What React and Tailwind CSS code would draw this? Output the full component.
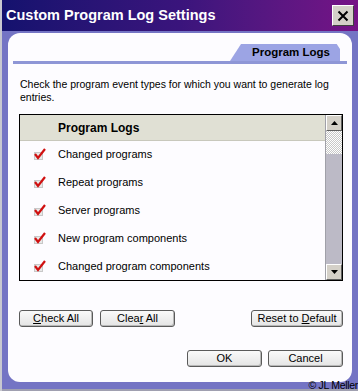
import React from "react";

function Check() {
  return (
    <svg width="12" height="12" viewBox="0 0 12 12" className="block">
      <rect x="0" y="4" width="9" height="8" fill="#c8c8c8" />
      <rect x="1" y="5" width="7" height="6" fill="#e8e8e8" />
      <path d="M1 6 L4 10 L11 1" stroke="#d01010" strokeWidth="2.2" fill="none" strokeLinejoin="miter" />
    </svg>
  );
}

function Btn({ children, w }) {
  return (
    <button
      className={`h-[17px] ${w} rounded-[3px] border border-[#5a5a5a] bg-gradient-to-b from-[#fafafa] to-[#e4e4e4] text-[11px] leading-none text-black flex items-center justify-center shadow-[inset_-1px_-1px_0_#b8b8b8]`}
    >
      {children}
    </button>
  );
}

export default function App() {
  const rows = [
    "Changed programs",
    "Repeat programs",
    "Server programs",
    "New program components",
    "Changed program components",
  ];
  return (
    <div
      className="w-[358px] h-[391px] flex flex-col bg-[#7474c4] border-l-2 border-[#c8c8d0] relative overflow-hidden"
      style={{ fontFamily: '"Liberation Sans", Arial, sans-serif' }}
    >
      {/* Title bar */}
      <div className="h-[31px] shrink-0 flex items-center justify-between pl-[4px] pr-[4px] bg-gradient-to-r from-[#14126e] via-[#3a147c] to-[#761286]">
        <span className="text-white font-bold text-[14.5px] tracking-[0px]">
          Custom Program Log Settings
        </span>
        <div className="w-[22px] h-[21px] bg-[#d4d0c8] border border-t-white border-l-white border-b-[#404040] border-r-[#404040] flex items-center justify-center">
          <svg width="12" height="12" viewBox="0 0 12 12">
            <path d="M1.5 1.5 L10.5 10.5 M10.5 1.5 L1.5 10.5" stroke="#000" strokeWidth="2" />
          </svg>
        </div>
      </div>

      {/* Body */}
      <div className="flex-1 pl-[6px] pr-[6px] pt-[2px] pb-[9px] flex flex-col">
        <div className="flex-1 bg-[#fdfcff] rounded-[12px] flex flex-col">
          {/* Tab row */}
          <div className="pt-[11px] px-[5px] flex flex-col">
            <div className="flex justify-end pr-[7px]">
              <div
                className="h-[17px] w-[110px] bg-[#9ca4e4] flex items-center justify-end pr-[10px] text-[11.5px] font-bold text-black"
                style={{ clipPath: "polygon(10% 0, 97% 0, 100% 30%, 100% 100%, 0 100%)", borderTopLeftRadius: 6 }}
              >
                Program Logs
              </div>
            </div>
            <div className="h-[3px] bg-[#8e96d6]" />
          </div>

          {/* Description */}
          <p className="mt-[14px] ml-[12px] mr-[8px] text-[10.5px] leading-[13px] text-black">
            Check the program event types for which you want to generate log entries.
          </p>

          {/* List */}
          <div className="mt-[10px] ml-[11px] mr-[9px] h-[167px] border border-black flex">
            <div className="flex-1 flex flex-col">
              <div className="h-[26px] bg-[#e0e0d4] border-b border-[#c8c8bc] flex items-center pl-[38px] text-[12px] font-bold text-black">
                Program Logs
              </div>
              <div className="flex flex-col -mt-[1px]">
                {rows.map((r) => (
                  <div key={r} className="h-[28px] flex items-center">
                    <div className="w-[38px] flex justify-center pl-[1px]">
                      <Check />
                    </div>
                    <span className="text-[11px] text-black">{r}</span>
                  </div>
                ))}
              </div>
            </div>
            <div className="w-[17px] flex flex-col bg-[#bcbac6] border-l border-[#a0a0a8]">
              <div className="h-[16px] bg-[#d4d0c8] border border-t-white border-l-white border-b-[#606060] border-r-[#606060] flex items-center justify-center">
                <svg width="7" height="4" viewBox="0 0 7 4"><path d="M0 4 L3.5 0 L7 4 Z" fill="#000" /></svg>
              </div>
              <div
                className="h-[23px]"
                style={{
                  backgroundImage:
                    "repeating-conic-gradient(#ffffff 0 25%, #c8c8c8 0 50%)",
                  backgroundSize: "2px 2px",
                }}
              />
              <div className="flex-1" />
              <div className="h-[16px] bg-[#d4d0c8] border border-t-white border-l-white border-b-[#606060] border-r-[#606060] flex items-center justify-center">
                <svg width="7" height="4" viewBox="0 0 7 4"><path d="M0 0 L7 0 L3.5 4 Z" fill="#000" /></svg>
              </div>
            </div>
          </div>

          {/* Action buttons */}
          <div className="mt-[29px] ml-[11px] mr-[9px] flex items-center">
            <div className="flex gap-[7px]">
              <Btn w="w-[74px]"><span><span className="underline">C</span>heck All</span></Btn>
              <Btn w="w-[75px]"><span>Clea<span className="underline">r</span> All</span></Btn>
            </div>
            <div className="flex-1" />
            <Btn w="w-[92px]"><span>Reset to <span className="underline">D</span>efault</span></Btn>
          </div>

          <div className="mt-[23px] ml-[11px] mr-[9px] flex justify-end gap-[6px]">
            <Btn w="w-[75px]">OK</Btn>
            <Btn w="w-[75px]">Cancel</Btn>
          </div>
        </div>
      </div>
      <div className="absolute right-0 bottom-0 h-[2px] left-0 bg-[#a0a0b0]" />
      <div className="absolute right-[0px] bottom-[0px] text-[10.5px] leading-[11px] text-black tracking-[-0.3px]">
        © JL Meller
      </div>
    </div>
  );
}
